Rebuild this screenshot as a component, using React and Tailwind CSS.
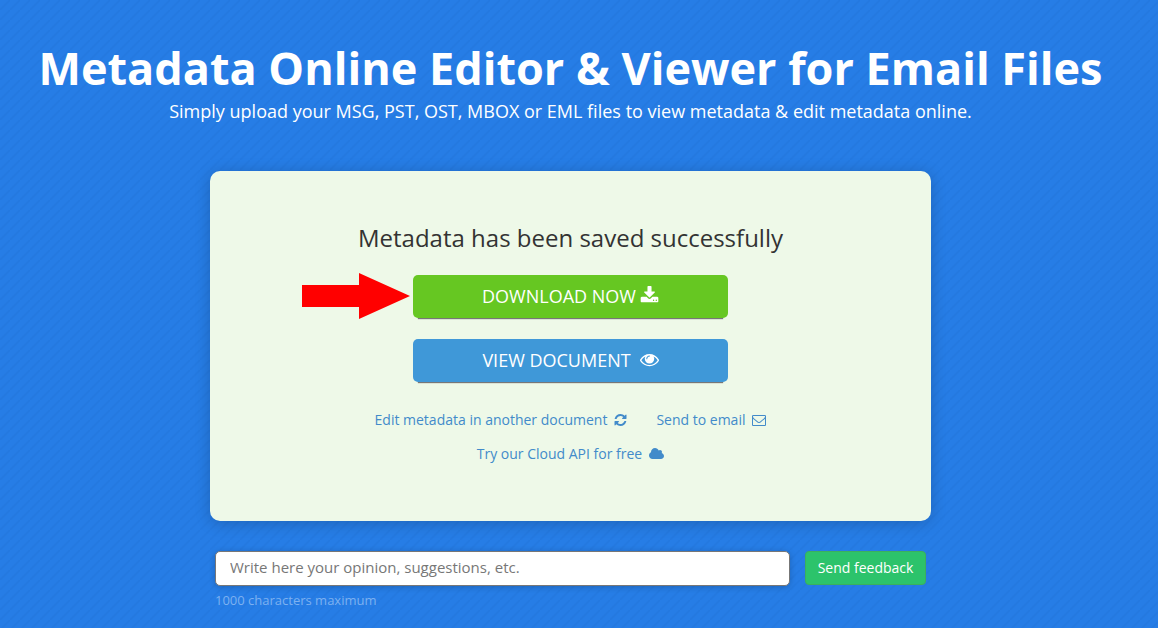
const icons = {
  download: {
    box: "0 0 1792 1792",
    d: "M1344 1344q0-26-19-45t-45-19-45 19-19 45 19 45 45 19 45-19 19-45zm256 0q0-26-19-45t-45-19-45 19-19 45 19 45 45 19 45-19 19-45zm128-224v320q0 40-28 68t-68 28h-1472q-40 0-68-28t-28-68v-320q0-40 28-68t68-28h465l135 136q58 56 136 56t136-56l136-136h464q40 0 68 28t28 68zm-325-569q17 41-14 70l-448 448q-18 19-45 19t-45-19l-448-448q-31-29-14-70 17-39 59-39h256v-448q0-26 19-45t45-19h256q26 0 45 19t19 45v448h256q42 0 59 39z",
  },
  eye: {
    box: "0 0 1792 1792",
    d: "M1664 960q-152-236-381-353 61 104 61 225 0 185-131.5 316.5t-316.5 131.5-316.5-131.5-131.5-316.5q0-121 61-225-229 117-381 353 133 205 333.5 326.5t434.5 121.5 434.5-121.5 333.5-326.5zm-720-384q0-20-14-34t-34-14q-125 0-214.5 89.5t-89.5 214.5q0 20 14 34t34 14 34-14 14-34q0-86 61-147t147-61q20 0 34-14t14-34zm848 384q0 34-20 69-140 230-376.5 368.5t-499.5 138.5-499.5-139-376.5-368q-20-35-20-69t20-69q140-229 376.5-368t499.5-139 499.5 139 376.5 368q20 35 20 69z",
  },
  refresh: {
    box: "128 0 1536 1792",
    d: "M1639 1056q0 5-1 7-64 268-268 434.5t-478 166.5q-146 0-282.5-55t-243.5-157l-129 129q-19 19-45 19t-45-19-19-45v-448q0-26 19-45t45-19h448q26 0 45 19t19 45-19 45l-137 137q71 66 161 102t187 36q134 0 250-65t186-179q11-17 53-117 8-23 30-23h192q13 0 22.5 9.5t9.5 22.5zm25-800v448q0 26-19 45t-45 19h-448q-26 0-45-19t-19-45 19-45l138-138q-148-137-349-137-134 0-250 65t-186 179q-11 17-53 117-8 23-30 23h-199q-13 0-22.5-9.5t-9.5-22.5v-7q65-268 270-434.5t480-166.5q146 0 284 55.5t245 156.5l130-129q19-19 45-19t45 19 19 45z",
  },
  envelope: {
    box: "0 0 1792 1792",
    d: "M1664 1504v-768q-32 36-69 66-268 206-426 338-51 43-83 67t-86.5 48.5-102.5 24.5h-2q-48 0-102.5-24.5t-86.5-48.5-83-67q-158-132-426-338-37-30-69-66v768q0 13 9.5 22.5t22.5 9.5h1472q13 0 22.5-9.5t9.5-22.5zm0-1051v-24.5l-.5-13-3-12.5-5.5-9-9-7.5-14-2.5h-1472q-13 0-22.5 9.5t-9.5 22.5q0 168 147 284 193 152 401 317 6 5 35 29.5t46 37.5 44.5 31.5 50.5 27.5 43 9h2q20 0 43-9t50.5-27.5 44.5-31.5 46-37.5 35-29.5q208-165 401-317 54-43 100.5-115.5t46.5-131.5zm128-37v1088q0 66-47 113t-113 47h-1472q-66 0-113-47t-47-113v-1088q0-66 47-113t113-47h1472q66 0 113 47t47 113z",
  },
  cloud: {
    box: "64 0 1920 1792",
    d: "M1984 1152q0 159-112.5 271.5t-271.5 112.5h-1088q-185 0-316.5-131.5t-131.5-316.5q0-132 71-241.5t187-163.5q-2-28-2-43 0-212 150-362t362-150q158 0 286.5 88t187.5 230q70-62 166-62 106 0 181 75t75 181q0 75-41 138 129 30 213 134.5t84 239.5z",
  },
};

function Icon({ name, className }) {
  return (
    <svg aria-hidden="true" viewBox={icons[name].box} className={className} fill="currentColor">
      <path d={icons[name].d} />
    </svg>
  );
}

function ActionButton({ children, className }) {
  return (
    <button
      type="button"
      className={`flex h-[43px] w-full items-center justify-center rounded-[5px] pb-0.5 text-lg leading-6 text-white shadow-[0_6px_1px_-5px_#777] ${className}`}
    >
      {children}
    </button>
  );
}

function TextLink({ children, icon, iconClass }) {
  return (
    <a href="#" className="inline-flex items-center gap-[7px] hover:underline">
      {children}
      <Icon name={icon} className={iconClass} />
    </a>
  );
}

export default function App() {
  return (
    <main className="min-h-screen bg-[#267de6] bg-[linear-gradient(135deg,transparent_38%,rgba(0,30,90,0.05)_50%,transparent_62%)] bg-[length:10px_10px] px-4 pr-[33px] pt-10 pb-4 font-['Open_Sans','Noto_Sans',sans-serif] text-white">
      <header className="text-center">
        <h1 className="text-[45px] leading-[56px] font-bold">
          Metadata Online Editor &amp; Viewer for Email Files
        </h1>
        <p className="text-lg leading-[30px]">
          Simply upload your MSG, PST, OST, MBOX or EML files to view metadata &amp; edit metadata online.
        </p>
      </header>

      <section className="mx-auto mt-[45px] max-w-[721px] rounded-[10px] bg-[#eef9e8] pt-12 pb-[50px] shadow-[0_2px_16px_rgba(0,0,0,0.2)]">
        <h2 className="text-center text-2xl leading-[38px] text-[#333]">Metadata has been saved successfully</h2>
        <div className="relative mx-auto mt-[18px] flex w-[315px] flex-col gap-[21px]">
          <svg
            aria-hidden="true"
            viewBox="0 0 108 46"
            className="absolute -top-0.5 right-full mr-[3px] h-[46px] w-[108px]"
          >
            <path d="M0 12H57V0L108 23L57 46V34H0Z" fill="#ff0000" />
          </svg>
          <ActionButton className="gap-1 bg-[#66c722]">
            DOWNLOAD NOW
            <Icon name="download" className="size-[19px]" />
          </ActionButton>
          <ActionButton className="gap-[9px] bg-[#3f98d8]">
            VIEW DOCUMENT
            <Icon name="eye" className="size-[19px]" />
          </ActionButton>
        </div>
        <nav className="mt-[21px] flex flex-col items-center text-sm leading-[34px] text-[#428bca]">
          <div className="flex gap-[29px]">
            <TextLink icon="refresh" iconClass="h-[14px] w-[13px]">Edit metadata in another document</TextLink>
            <TextLink icon="envelope" iconClass="size-[14px]">Send to email</TextLink>
          </div>
          <TextLink icon="cloud" iconClass="h-[14px] w-[15px]">Try our Cloud API for free</TextLink>
        </nav>
      </section>

      <form className="mx-auto mt-[30px] max-w-[711px]" onSubmit={(e) => e.preventDefault()}>
        <div className="flex gap-[15px]">
          <input
            type="text"
            aria-label="Feedback"
            maxLength={1000}
            aria-describedby="limit"
            placeholder="Write here your opinion, suggestions, etc."
            className="h-[35px] min-w-0 flex-1 rounded-[5px] border border-[#777] bg-white px-[14px] pb-[3px] text-[15px] text-[#333] shadow-[0_1px_6px_rgba(0,0,0,0.2)] placeholder:text-[#777]"
          />
          <button
            type="submit"
            className="h-[34px] w-[121px] rounded border border-[#3bb05d] bg-[#2cc36b] text-sm text-white"
          >
            Send feedback
          </button>
        </div>
        <p id="limit" className="mt-1 text-[13px] leading-5 text-[#7db1f0]">1000 characters maximum</p>
      </form>
    </main>
  );
}
